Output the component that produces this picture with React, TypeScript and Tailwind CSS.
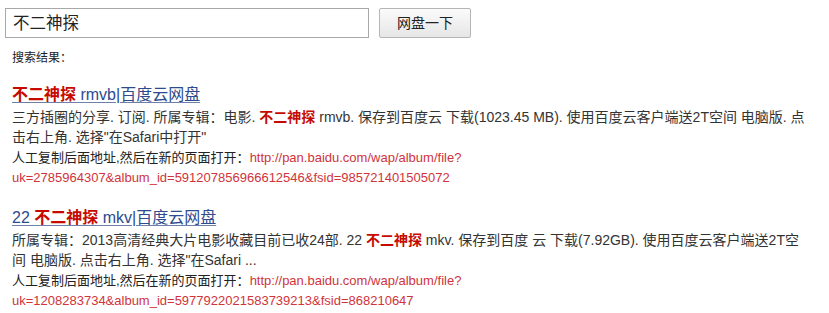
import React from "react";

const F = { fontFamily: '"Liberation Sans", "Noto Sans CJK SC", sans-serif' };

function Red({ children }: { children: React.ReactNode }) {
  return <span className="text-[#c60a00] font-bold">{children}</span>;
}

export default function App() {
  return (
    <div className="w-[829px] h-[313px] bg-white overflow-hidden" style={F}>
      <div className="flex items-center pt-[8px] pl-[5px] gap-[10px]">
        <div className="w-[364px] h-[30px] border border-[#a8a8a8] flex items-center pl-[7px] text-[16.5px] text-[#222]">
          不二神探
        </div>
        <button className="w-[92px] h-[30px] border border-[#b5b5b5] bg-gradient-to-b from-[#fbfbfb] to-[#e6e6e6] text-[14px] text-[#222] rounded-[2px]">
          网盘一下
        </button>
      </div>
      <div className="pl-[12px] mt-[12px] text-[12px] text-[#222] leading-[16px]">搜索结果：</div>

      <div className="pl-[12px] mt-[18px]">
        <div className="text-[16px] leading-[22px] text-[#2d4b8e] underline underline-offset-[2px] decoration-[#6e7fa8] whitespace-nowrap">
          <Red>不二神探</Red> rmvb|百度云网盘
        </div>
        <div className="text-[14px] text-[#333] leading-[20px] mt-[1px] whitespace-nowrap">
          <div>三方插圈的分享. 订阅. 所属专辑：电影. <Red>不二神探</Red> rmvb. 保存到百度云 下载(1023.45 MB). 使用百度云客户端送2T空间 电脑版. 点</div>
          <div>击右上角. 选择"在Safari中打开"</div>
        </div>
        <div className="text-[13px] leading-[20px] mt-[1px] whitespace-nowrap">
          <div className="text-[#222]">人工复制后面地址,然后在新的页面打开：<span className="text-[#d0343a]">http://pan.baidu.com/wap/album/file?</span></div>
          <div className="text-[#d0343a]">uk=2785964307&amp;album_id=591207856966612546&amp;fsid=985721401505072</div>
        </div>
      </div>

      <div className="pl-[12px] mt-[19px]">
        <div className="text-[16px] leading-[22px] text-[#2d4b8e] underline underline-offset-[2px] decoration-[#6e7fa8] whitespace-nowrap">
          22 <Red>不二神探</Red> mkv|百度云网盘
        </div>
        <div className="text-[14px] text-[#333] leading-[20px] mt-[1px] whitespace-nowrap">
          <div>所属专辑：2013高清经典大片电影收藏目前已收24部. 22 <Red>不二神探</Red> mkv. 保存到百度 云 下载(7.92GB). 使用百度云客户端送2T空</div>
          <div>间 电脑版. 点击右上角. 选择"在Safari ...</div>
        </div>
        <div className="text-[13px] leading-[20px] mt-[1px] whitespace-nowrap">
          <div className="text-[#222]">人工复制后面地址,然后在新的页面打开：<span className="text-[#d0343a]">http://pan.baidu.com/wap/album/file?</span></div>
          <div className="text-[#d0343a]">uk=1208283734&amp;album_id=5977922021583739213&amp;fsid=868210647</div>
        </div>
      </div>
    </div>
  );
}
